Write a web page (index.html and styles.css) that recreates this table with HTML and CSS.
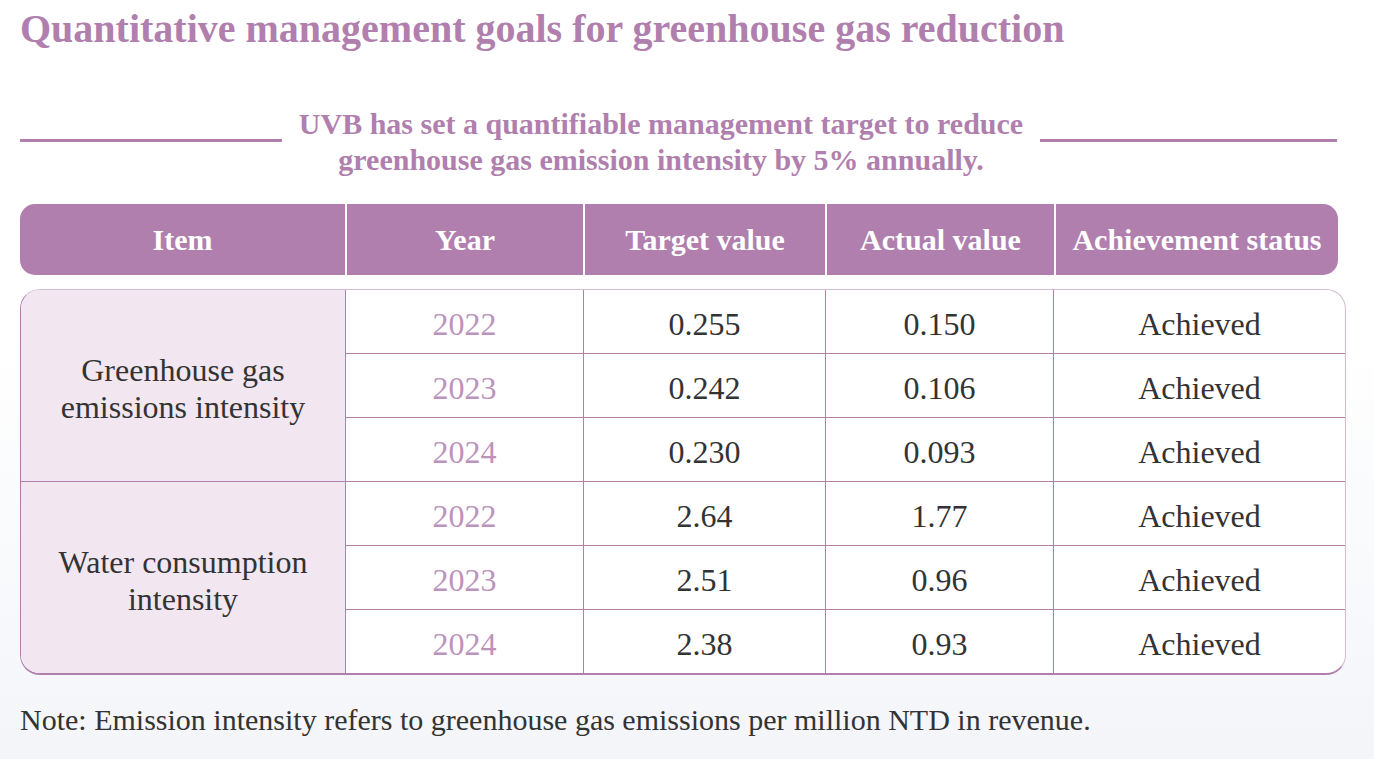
FILE: index.html
```html
<!DOCTYPE html>
<html lang="en">
<head>
<meta charset="utf-8">
<title>Quantitative management goals</title>
<link rel="stylesheet" href="styles.css">
</head>
<body>
<main class="page">
  <h1 class="title">Quantitative management goals for greenhouse gas reduction</h1>
  <div class="lead">
    <span class="rule rule-left"></span>
    <p class="lead-text">UVB has set a quantifiable management target to reduce<br>greenhouse gas emission intensity by 5% annually.</p>
    <span class="rule rule-right"></span>
  </div>
  <div class="thead">
    <div class="th c1">Item</div>
    <div class="th c2">Year</div>
    <div class="th c3">Target value</div>
    <div class="th c4">Actual value</div>
    <div class="th c5">Achievement status</div>
  </div>
  <div class="tbody-wrap">
    <table class="tbody">
      <colgroup>
        <col class="w1"><col class="w2"><col class="w3"><col class="w4"><col class="w5">
      </colgroup>
      <tr>
        <td class="item" rowspan="3">Greenhouse gas<br>emissions intensity</td>
        <td class="year">2022</td><td>0.255</td><td>0.150</td><td class="last">Achieved</td>
      </tr>
      <tr><td class="year">2023</td><td>0.242</td><td>0.106</td><td class="last">Achieved</td></tr>
      <tr><td class="year">2024</td><td>0.230</td><td>0.093</td><td class="last">Achieved</td></tr>
      <tr>
        <td class="item bottom" rowspan="3">Water consumption<br>intensity</td>
        <td class="year">2022</td><td>2.64</td><td>1.77</td><td class="last">Achieved</td>
      </tr>
      <tr><td class="year">2023</td><td>2.51</td><td>0.96</td><td class="last">Achieved</td></tr>
      <tr class="final"><td class="year">2024</td><td>2.38</td><td>0.93</td><td class="last">Achieved</td></tr>
    </table>
  </div>
  <p class="note">Note: Emission intensity refers to greenhouse gas emissions per million NTD in revenue.</p>
</main>
</body>
</html>
```

FILE: styles.css
```css
html, body {
  margin: 0;
  padding: 0;
}
body {
  min-height: 759px;
  background: linear-gradient(to bottom, #ffffff 0%, #ffffff 45%, #f3f5f9 100%);
  font-family: "Liberation Serif", "Times New Roman", serif;
  color: #333333;
}
.page {
  padding: 5px 20px 0 20px;
}
.title {
  margin: 0;
  font-size: 40px;
  line-height: 48px;
  font-weight: 700;
  color: #b07fae;
  white-space: nowrap;
}
.lead {
  display: flex;
  align-items: center;
  width: 1317px;
  margin-top: 53px;
}
.rule {
  display: block;
  height: 3px;
  background: #b07fae;
  margin-top: -4px;
}
.rule-left { flex: 0 0 262px; }
.rule-right { flex: 0 0 297px; }
.lead-text {
  flex: 1;
  margin: 0;
  text-align: center;
  font-size: 30px;
  line-height: 36px;
  font-weight: 700;
  color: #b07fae;
  white-space: nowrap;
}
.thead {
  display: flex;
  width: 1318px;
  height: 71px;
  margin-top: 26px;
  background: #b07fae;
  border-radius: 15px;
  overflow: hidden;
}
.th {
  display: flex;
  align-items: center;
  justify-content: center;
  color: #ffffff;
  font-weight: 700;
  font-size: 30px;
  border-right: 2px solid #ffffff;
  box-sizing: border-box;
  white-space: nowrap;
}
.th.c1 { width: 327px; }
.th.c2 { width: 238px; }
.th.c3 { width: 242px; }
.th.c4 { width: 229px; }
.th.c5 { flex: 1; border-right: none; }
.tbody-wrap {
  width: 1326px;
  box-sizing: border-box;
  margin-top: 14px;
  border: 1px solid #b07fae;
  border-top-color: #d5bcd3;
  border-right-color: #d5bcd3;
  border-bottom-width: 2px;
  border-radius: 20px;
  overflow: hidden;
  background: #ffffff;
}
.tbody {
  width: 100%;
  border-collapse: separate;
  border-spacing: 0;
  table-layout: fixed;
}
.w1 { width: 325px; }
.w2 { width: 238px; }
.w3 { width: 242px; }
.w4 { width: 228px; }
.w5 { width: auto; }
.tbody td {
  box-sizing: border-box;
  height: 64px;
  padding: 6px 0 0 0;
  text-align: center;
  vertical-align: middle;
  font-size: 32px;
  line-height: 37px;
  color: #333333;
  border-right: 1px solid #b07fae;
  border-bottom: 1px solid #b07fae;
  white-space: nowrap;
}
.tbody td.last { border-right: none; }
.tbody tr.final td { border-bottom: none; height: 63px; }
.tbody td.item.bottom { border-bottom: none; }
.tbody td.item {
  background: #f2e6f0;
}
.tbody td.year {
  color: #bc93ba;
}
.note {
  margin: 28px 0 0 0;
  font-size: 30px;
  line-height: 34px;
  color: #333333;
  white-space: nowrap;
}
```
